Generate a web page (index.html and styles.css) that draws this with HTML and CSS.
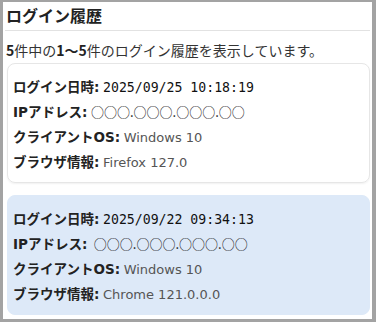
FILE: index.html
```html
<!DOCTYPE html>
<html lang="ja">
<head>
<meta charset="utf-8">
<title>ログイン履歴</title>
<link rel="stylesheet" href="styles.css">
</head>
<body>
<div class="panel">
  <h1 class="title">ログイン履歴</h1>
  <p class="summary"><b>5</b>件中の<b>1〜5</b>件のログイン履歴を表示しています。</p>
  <div class="list">
    <div class="card">
      <div class="row"><span class="label">ログイン日時:</span> <span class="val mono">2025/09/25 10:18:19</span></div>
      <div class="row"><span class="label">IPアドレス:</span> <span class="val ip">○○○.○○○.○○○.○○</span></div>
      <div class="row"><span class="label">クライアントOS:</span> <span class="val muted">Windows 10</span></div>
      <div class="row"><span class="label">ブラウザ情報:</span> <span class="val muted">Firefox 127.0</span></div>
    </div>
    <div class="card current">
      <div class="row"><span class="label">ログイン日時:</span> <span class="val mono">2025/09/22 09:34:13</span></div>
      <div class="row"><span class="label">IPアドレス:</span> <span class="val ip">&nbsp;○○○.○○○.○○○.○○</span></div>
      <div class="row"><span class="label">クライアントOS:</span> <span class="val muted">Windows 10</span></div>
      <div class="row"><span class="label">ブラウザ情報:</span> <span class="val muted">Chrome 121.0.0.0</span></div>
    </div>
  </div>
</div>
</body>
</html>
```

FILE: styles.css
```css
html, body {
  margin: 0;
  padding: 0;
}
body {
  background: #a3a3a3;
  font-family: "Noto Sans CJK JP", "Noto Sans", sans-serif;
  color: #222;
}
.panel {
  box-sizing: border-box;
  width: 376px;
  height: 322px;
  overflow: hidden;
  background: #fff;
  border-style: solid;
  border-color: #a3a3a3;
  border-width: 2px 4px 3px 3px;
  padding: 0 2px 0 2px;
}
.title {
  margin: 0;
  padding: 1px 0 3px 1px;
  font-size: 16px;
  line-height: 24px;
  font-weight: 700;
  color: #222;
  border-bottom: 1px solid #e2e2e2;
}
.summary {
  margin: 9px 0 0 1px;
  font-size: 14px;
  line-height: 20px;
  color: #333;
}
.summary b {
  font-weight: 700;
  color: #222;
}
.list {
  display: flex;
  flex-direction: column;
  gap: 12px;
  margin: 3px 0 0 2px;
}
.card {
  border: 1px solid #e6e6e6;
  border-radius: 8px;
  padding: 9px 5px;
  box-shadow: 0 1px 2px rgba(0,0,0,0.06);
}
.card.current {
  background: #dde9f8;
  border-color: #dde9f8;
  box-shadow: none;
}
.row {
  height: 25px;
  line-height: 25px;
  white-space: nowrap;
}
.label {
  font-family: "DejaVu Sans", "Noto Sans CJK JP", sans-serif;
  font-size: 13.5px;
  font-weight: 700;
  color: #222;
}
.val {
  font-family: "DejaVu Sans", Verdana, sans-serif;
  font-size: 13px;
  color: #111;
}
.val.mono {
  font-family: "DejaVu Sans Mono", "Liberation Mono", monospace;
  font-size: 13.2px;
}
.val.ip {
  font-family: "Noto Sans CJK JP", sans-serif;
  font-size: 13px;
}
.val.muted {
  color: #555;
}
```
